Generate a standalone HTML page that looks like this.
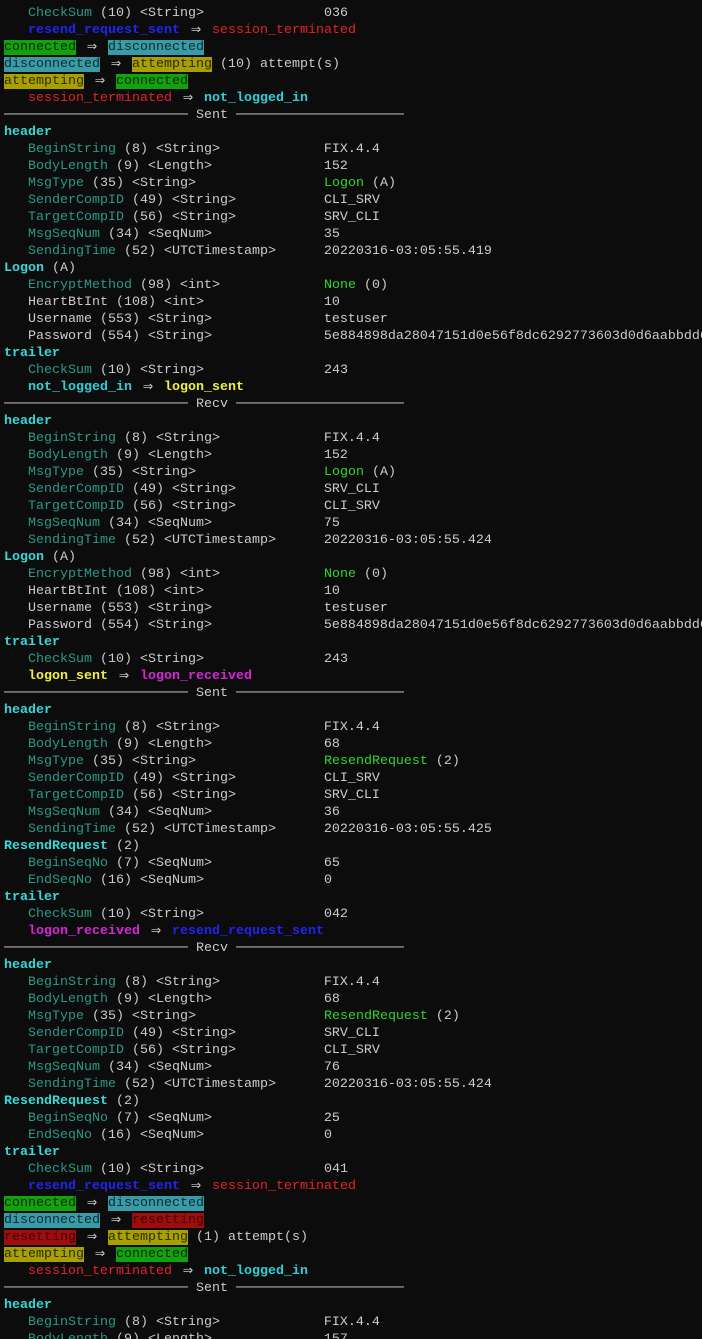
<!DOCTYPE html>
<html><head><meta charset="utf-8"><style>
html,body{margin:0;padding:0;background:#0c0c0c;width:702px;height:1339px;overflow:hidden}
pre{margin:0;padding:5px 0 0 4px;width:698px;overflow:hidden;font-family:"Liberation Mono","DejaVu Sans Mono",monospace;font-size:13.33px;line-height:17px;color:#cccccc;white-space:pre}
.f{color:#2a9a86}.h{color:#3ad8d8;font-weight:bold}.g{color:#2fd52f}.r{color:#e8202a}.b{color:#2323f0;font-weight:bold}
.c{color:#30d0d8;font-weight:bold}.y{color:#f0f040;font-weight:bold}.m{color:#d826d8;font-weight:bold}
.bg{background:#13a10e;color:#0b2b0b}.bt{background:#3a9aa6;color:#0b2b30}.bo{background:#a8a000;color:#2b2b00}.br{background:#a00d0d;color:#3a0505}
i{font-style:normal;display:inline-block;width:16px;text-align:center;font-size:17px;line-height:17px;vertical-align:top;color:#cccccc}
</style></head><body><pre>   <span class="f">CheckSum</span> (10) &lt;String&gt;               036
   <span class="b">resend_request_sent</span> <i>⇒</i> <span class="r">session_terminated</span>
<span class="bg">connected</span> <i>⇒</i> <span class="bt">disconnected</span>
<span class="bt">disconnected</span> <i>⇒</i> <span class="bo">attempting</span> (10) attempt(s)
<span class="bo">attempting</span> <i>⇒</i> <span class="bg">connected</span>
   <span class="r">session_terminated</span> <i>⇒</i> <span class="c">not_logged_in</span>
─────────────────────── Sent ─────────────────────
<span class="h">header</span>
   <span class="f">BeginString</span> (8) &lt;String&gt;             FIX.4.4
   <span class="f">BodyLength</span> (9) &lt;Length&gt;              152
   <span class="f">MsgType</span> (35) &lt;String&gt;                <span class="g">Logon</span> (A)
   <span class="f">SenderCompID</span> (49) &lt;String&gt;           CLI_SRV
   <span class="f">TargetCompID</span> (56) &lt;String&gt;           SRV_CLI
   <span class="f">MsgSeqNum</span> (34) &lt;SeqNum&gt;              35
   <span class="f">SendingTime</span> (52) &lt;UTCTimestamp&gt;      20220316-03:05:55.419
<span class="h">Logon</span> (A)
   <span class="f">EncryptMethod</span> (98) &lt;int&gt;             <span class="g">None</span> (0)
   HeartBtInt (108) &lt;int&gt;               10
   Username (553) &lt;String&gt;              testuser
   Password (554) &lt;String&gt;              5e884898da28047151d0e56f8dc6292773603d0d6aabbdd62a11ef721d1542d8
<span class="h">trailer</span>
   <span class="f">CheckSum</span> (10) &lt;String&gt;               243
   <span class="c">not_logged_in</span> <i>⇒</i> <span class="y">logon_sent</span>
─────────────────────── Recv ─────────────────────
<span class="h">header</span>
   <span class="f">BeginString</span> (8) &lt;String&gt;             FIX.4.4
   <span class="f">BodyLength</span> (9) &lt;Length&gt;              152
   <span class="f">MsgType</span> (35) &lt;String&gt;                <span class="g">Logon</span> (A)
   <span class="f">SenderCompID</span> (49) &lt;String&gt;           SRV_CLI
   <span class="f">TargetCompID</span> (56) &lt;String&gt;           CLI_SRV
   <span class="f">MsgSeqNum</span> (34) &lt;SeqNum&gt;              75
   <span class="f">SendingTime</span> (52) &lt;UTCTimestamp&gt;      20220316-03:05:55.424
<span class="h">Logon</span> (A)
   <span class="f">EncryptMethod</span> (98) &lt;int&gt;             <span class="g">None</span> (0)
   HeartBtInt (108) &lt;int&gt;               10
   Username (553) &lt;String&gt;              testuser
   Password (554) &lt;String&gt;              5e884898da28047151d0e56f8dc6292773603d0d6aabbdd62a11ef721d1542d8
<span class="h">trailer</span>
   <span class="f">CheckSum</span> (10) &lt;String&gt;               243
   <span class="y">logon_sent</span> <i>⇒</i> <span class="m">logon_received</span>
─────────────────────── Sent ─────────────────────
<span class="h">header</span>
   <span class="f">BeginString</span> (8) &lt;String&gt;             FIX.4.4
   <span class="f">BodyLength</span> (9) &lt;Length&gt;              68
   <span class="f">MsgType</span> (35) &lt;String&gt;                <span class="g">ResendRequest</span> (2)
   <span class="f">SenderCompID</span> (49) &lt;String&gt;           CLI_SRV
   <span class="f">TargetCompID</span> (56) &lt;String&gt;           SRV_CLI
   <span class="f">MsgSeqNum</span> (34) &lt;SeqNum&gt;              36
   <span class="f">SendingTime</span> (52) &lt;UTCTimestamp&gt;      20220316-03:05:55.425
<span class="h">ResendRequest</span> (2)
   <span class="f">BeginSeqNo</span> (7) &lt;SeqNum&gt;              65
   <span class="f">EndSeqNo</span> (16) &lt;SeqNum&gt;               0
<span class="h">trailer</span>
   <span class="f">CheckSum</span> (10) &lt;String&gt;               042
   <span class="m">logon_received</span> <i>⇒</i> <span class="b">resend_request_sent</span>
─────────────────────── Recv ─────────────────────
<span class="h">header</span>
   <span class="f">BeginString</span> (8) &lt;String&gt;             FIX.4.4
   <span class="f">BodyLength</span> (9) &lt;Length&gt;              68
   <span class="f">MsgType</span> (35) &lt;String&gt;                <span class="g">ResendRequest</span> (2)
   <span class="f">SenderCompID</span> (49) &lt;String&gt;           SRV_CLI
   <span class="f">TargetCompID</span> (56) &lt;String&gt;           CLI_SRV
   <span class="f">MsgSeqNum</span> (34) &lt;SeqNum&gt;              76
   <span class="f">SendingTime</span> (52) &lt;UTCTimestamp&gt;      20220316-03:05:55.424
<span class="h">ResendRequest</span> (2)
   <span class="f">BeginSeqNo</span> (7) &lt;SeqNum&gt;              25
   <span class="f">EndSeqNo</span> (16) &lt;SeqNum&gt;               0
<span class="h">trailer</span>
   <span class="f">CheckSum</span> (10) &lt;String&gt;               041
   <span class="b">resend_request_sent</span> <i>⇒</i> <span class="r">session_terminated</span>
<span class="bg">connected</span> <i>⇒</i> <span class="bt">disconnected</span>
<span class="bt">disconnected</span> <i>⇒</i> <span class="br">resetting</span>
<span class="br">resetting</span> <i>⇒</i> <span class="bo">attempting</span> (1) attempt(s)
<span class="bo">attempting</span> <i>⇒</i> <span class="bg">connected</span>
   <span class="r">session_terminated</span> <i>⇒</i> <span class="c">not_logged_in</span>
─────────────────────── Sent ─────────────────────
<span class="h">header</span>
   <span class="f">BeginString</span> (8) &lt;String&gt;             FIX.4.4
   <span class="f">BodyLength</span> (9) &lt;Length&gt;              157
</pre></body></html>
